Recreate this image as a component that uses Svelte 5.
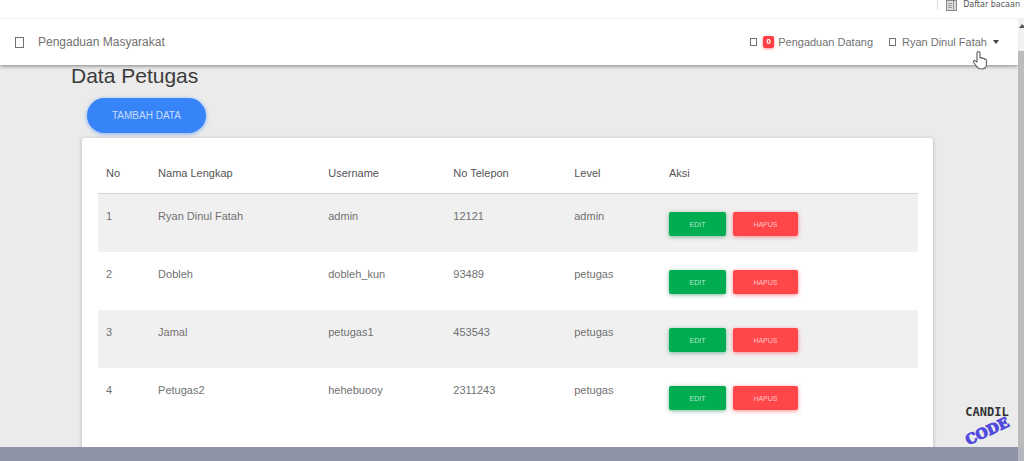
<script>
  const petugas = [
    { nama: 'Ryan Dinul Fatah', username: 'admin', telp: '12121', level: 'admin' },
    { nama: 'Dobleh', username: 'dobleh_kun', telp: '93489', level: 'petugas' },
    { nama: 'Jamal', username: 'petugas1', telp: '453543', level: 'petugas' },
    { nama: 'Petugas2', username: 'hehebuooy', telp: '2311243', level: 'petugas' }
  ];
</script>

{#snippet box(w, h)}
  <svg class="box" width={w} height={h} aria-hidden="true">
    <rect x="0.5" y="0.5" width={w - 1} height={h - 1} fill="none" stroke="currentColor" />
  </svg>
{/snippet}

<div class="screen">
  <div class="bookmarks">
    <a href="#bacaan">
      <svg width="11" height="11" viewBox="0 0 11 11" aria-hidden="true">
        <rect x="0.5" y="0.5" width="10" height="10" fill="#ddd" stroke="#888" />
        <path d="M2 3.5h4M2 5.5h4M2 7.5h4M7.5 1v9" stroke="#999" fill="none" />
      </svg>
      Daftar bacaan
    </a>
  </div>

  <div class="view">
    <div class="page">
      <nav>
        <a class="brand" href="#home">{@render box(9, 11)} Pengaduan Masyarakat</a>
        <a class="incoming" href="#pengaduan">
          {@render box(7, 8)}
          <span class="badge">0</span>
          Pengaduan Datang
        </a>
        <button class="user">
          {@render box(7, 8)}
          <span>Ryan Dinul Fatah</span>
          <svg width="6" height="4" viewBox="0 0 6 4" aria-hidden="true"><path d="M0 0h6L3 4z" fill="#444" /></svg>
        </button>
      </nav>

      <main>
        <h1>Data Petugas</h1>
        <button class="add">TAMBAH DATA</button>
        <div class="card">
          <table>
            <thead>
              <tr>
                <th>No</th>
                <th>Nama Lengkap</th>
                <th>Username</th>
                <th>No Telepon</th>
                <th>Level</th>
                <th>Aksi</th>
              </tr>
            </thead>
            <tbody>
              {#each petugas as p, i}
                <tr>
                  <td>{i + 1}</td>
                  <td>{p.nama}</td>
                  <td>{p.username}</td>
                  <td>{p.telp}</td>
                  <td>{p.level}</td>
                  <td>
                    <div class="aksi">
                      <button class="edit">EDIT</button>
                      <button class="hapus">HAPUS</button>
                    </div>
                  </td>
                </tr>
              {/each}
            </tbody>
          </table>
        </div>
      </main>
    </div>

    <div class="scrollbar" aria-hidden="true">
      <svg width="6" height="32" viewBox="0 0 6 32"><path d="M1 9l3-4 2 2v2z" fill="#555" /></svg>
      <div class="thumb"></div>
    </div>
  </div>

  <footer></footer>

  <div class="watermark">
    <span class="candil">CANDIL</span>
    <span class="code">CODE</span>
  </div>

  <svg class="cursor" width="16" height="20" viewBox="0 0 16 20" aria-hidden="true">
    <path
      d="M5 12V3.2C5 1 8 1 8 3.2V8c1-.8 2.200-.4 2.400.5 1-.5 2 0 2.100.8 1-.4 2 .1 2 1.200V14c0 3-2 5-5 5-2.600 0-4-1-5.200-3L1.600 12.500C.8 11 2.500 10 3.500 11z"
      fill="#fff"
      stroke="#666"
      stroke-width="1.2"
      stroke-linejoin="round"
    />
  </svg>
</div>

<style>
  :global(body) {
    margin: 0;
    background: #ebebeb;
  }
  .screen {
    position: relative;
    height: 100vh;
    display: flex;
    flex-direction: column;
    overflow: hidden;
    font-family: 'Liberation Sans', Arial, sans-serif;
    font-size: 11px;
    line-height: 16px;
    color: #717171;
  }
  a {
    color: inherit;
    text-decoration: none;
  }
  button {
    font-family: inherit;
    border: 0;
    padding: 0;
    cursor: pointer;
  }
  .bookmarks {
    flex: none;
    display: flex;
    justify-content: flex-end;
    height: 18px;
    background: #fff;
    border-bottom: 1px solid #f0f0f0;
  }
  .bookmarks a {
    display: flex;
    align-items: center;
    gap: 6px;
    height: 10px;
    padding: 0 4px 0 8px;
    border-left: 1px solid #ddd;
    font-family: 'DejaVu Sans', sans-serif;
    font-size: 8px;
    color: #555;
  }
  .view {
    flex: 1;
    min-height: 0;
    display: flex;
  }
  .page {
    flex: 1;
    overflow: hidden;
    background: #ebebeb;
  }
  nav {
    position: relative;
    display: flex;
    align-items: center;
    height: 46px;
    padding: 0 19px 0 15px;
    background: #fff;
    box-shadow: 0 1px 4px rgba(0, 0, 0, 0.45);
  }
  nav a,
  .user {
    display: flex;
    align-items: center;
  }
  .box {
    flex: none;
  }
  .brand {
    gap: 14px;
    margin-right: auto;
    font-size: 12px;
  }
  .incoming {
    gap: 4px;
    margin-right: 16px;
  }
  .badge {
    width: 11px;
    height: 12px;
    margin-left: 2px;
    border-radius: 2px;
    background: #ff3f42;
    box-shadow: 0 1px 3px rgba(255, 60, 60, 0.5);
    color: #fff;
    font-size: 8px;
    font-weight: bold;
    line-height: 12px;
    text-align: center;
  }
  .user {
    gap: 6px;
    background: none;
    color: inherit;
    font-size: 11px;
  }
  main {
    padding: 0 85px 0 71px;
  }
  h1 {
    margin: 0;
    color: #3c3c3c;
    font-size: 21px;
    font-weight: normal;
    line-height: 22px;
  }
  .add {
    display: block;
    margin: 11px 16px 5px;
    padding: 0 25px;
    height: 35px;
    border-radius: 18px;
    background: #3784f8;
    box-shadow: 0 1px 4px rgba(55, 132, 248, 0.6);
    color: #c8ddfd;
    font-size: 10px;
  }
  .card {
    margin-left: 11px;
    padding: 15px 15px 24px 16px;
    border-radius: 3px;
    background: #fff;
    box-shadow: 0 1px 4px rgba(0, 0, 0, 0.25);
  }
  table {
    width: 100%;
    table-layout: fixed;
    border-collapse: collapse;
  }
  th,
  td {
    padding: 0 8px;
    text-align: left;
    vertical-align: top;
  }
  th {
    padding: 12px 8px;
    border-bottom: 1px solid #d6d6d6;
    color: #555;
    font-weight: normal;
  }
  th:nth-child(1) {
    width: 4.4%;
  }
  th:nth-child(2) {
    width: 18.8%;
  }
  th:nth-child(3) {
    width: 13.3%;
  }
  th:nth-child(4) {
    width: 12.8%;
  }
  th:nth-child(5) {
    width: 9.6%;
  }
  td {
    height: 44px;
    padding-top: 14px;
  }
  tbody tr:nth-child(odd) {
    background: #f0f0f0;
  }
  .aksi {
    display: flex;
    gap: 7px;
    padding-top: 4px;
  }
  .aksi button {
    height: 24px;
    border-radius: 2px;
    color: #fff;
    font-size: 7px;
  }
  .aksi .edit {
    width: 57px;
    background: #00ad50;
    box-shadow: 0 1px 4px rgba(0, 120, 60, 0.5);
    color: #b5e8cb;
  }
  .aksi .hapus {
    width: 65px;
    background: #ff4649;
    box-shadow: 0 1px 4px rgba(255, 70, 73, 0.6);
    color: #ffc4c5;
  }
  .scrollbar {
    flex: none;
    width: 6px;
    display: flex;
    flex-direction: column;
    background: #f1f1f1;
  }
  .thumb {
    flex: 1;
    background: #bcbcbc;
  }
  footer {
    flex: none;
    height: 14px;
    margin-right: 6px;
    background: #8c94a6;
    box-shadow: 6px 0 0 #b4b7bf;
  }
  .watermark {
    position: absolute;
    right: 14px;
    bottom: 17px;
    width: 46px;
    display: flex;
    flex-direction: column;
    align-items: center;
  }
  .candil {
    color: #333;
    font-family: 'DejaVu Sans Mono', monospace;
    font-size: 12px;
    font-weight: bold;
    line-height: 12px;
  }
  .code {
    color: #5148e0;
    font-family: 'DejaVu Serif', serif;
    font-size: 14px;
    font-weight: bold;
    line-height: 26px;
    -webkit-text-stroke: 1px #5148e0;
    transform: rotate(-25deg);
  }
  .cursor {
    position: absolute;
    top: 50px;
    right: 36px;
  }
</style>
